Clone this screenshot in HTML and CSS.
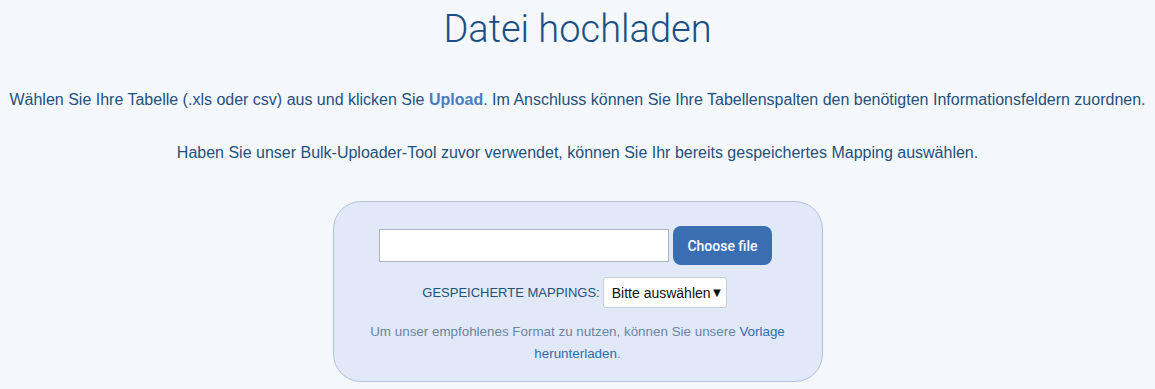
FILE: index.html
```html
<!DOCTYPE html>
<html lang="de">
<head>
  <meta charset="UTF-8" />
  <meta name="viewport" content="width=device-width, initial-scale=1.0" />
  <title>Datei hochladen</title>
  <link rel="stylesheet" href="styles.css">
</head>
<body>
  <div class="upload-page">
    <h1 class="title">Datei hochladen</h1>

    <p class="intro">Wählen Sie Ihre Tabelle (.xls oder csv) aus und klicken Sie <strong>Upload</strong>. Im Anschluss können Sie Ihre Tabellenspalten den benötigten Informationsfeldern zuordnen.</p>
    <p class="intro">Haben Sie unser Bulk-Uploader-Tool zuvor verwendet, können Sie Ihr bereits gespeichertes Mapping auswählen.</p>

    <div class="upload-box">
      <div class="file-row">
        <input type="text" class="file-name" id="file-name" readonly>
        <button class="choose-btn" id="choose">Choose file</button>
      </div>

      <div class="mapping-row">
        <label for="mapping">GESPEICHERTE MAPPINGS:</label>
        <div class="select" id="mapping">
          <span>Bitte auswählen</span><span class="caret">▼</span>
        </div>
      </div>

      <p class="hint">Um unser empfohlenes Format zu nutzen, können Sie unsere <a href="#">Vorlage</a><br><a href="#">herunterladen</a>.</p>
    </div>
  </div>
</body>
</html>
```

FILE: styles.css
```css
:root {
  --bg: #f4f8fc;
  --text: #24507c;
  --title: #1b4f82;
  --accent: #3a6db1;
  --box: #e1e9f8;
  --box-border: #b3c0d6;
}

body {
  margin: 0;
  background: var(--bg);
  color: var(--text);
  font-family: 'Liberation Sans', Arial, sans-serif;
}

.upload-page {
  text-align: center;
  padding-top: 6px;
}

.title {
  margin: 0;
  font-family: Roboto, sans-serif;
  font-weight: 300;
  font-size: 38px;
  line-height: 46px;
  color: var(--title);
}

.intro {
  margin: 38px 0 0;
  font-size: 16px;
  line-height: 20px;
}

.intro + .intro {
  margin-top: 33px;
}

.intro strong {
  color: #4a7dbf;
}

.upload-box {
  width: 488px;
  margin: 38px auto 0;
  padding: 24px 0 16px;
  background: var(--box);
  border: 1px solid var(--box-border);
  border-radius: 28px;
}

.file-row {
  display: flex;
  justify-content: center;
  align-items: center;
  gap: 4px;
  padding-right: 4px;
}

.file-name {
  width: 290px;
  height: 33px;
  box-sizing: border-box;
  border: 1px solid #aab4c4;
  background: #fff;
  margin: 0;
}

.choose-btn {
  width: 99px;
  height: 39px;
  border: none;
  border-radius: 8px;
  background: var(--accent);
  color: #fff;
  font-family: Roboto, sans-serif;
  font-weight: 500;
  font-size: 14px;
  cursor: pointer;
}

.mapping-row {
  display: flex;
  justify-content: center;
  align-items: center;
  gap: 3px;
  margin-top: 12px;
  padding-right: 6px;
  font-size: 13px;
}

.select {
  width: 124px;
  height: 31px;
  box-sizing: border-box;
  display: flex;
  align-items: center;
  padding-left: 8px;
  background: #fff;
  border: 1px solid #c4ccd8;
  border-radius: 3px;
  color: #111;
  font-size: 14px;
}

.caret {
  font-size: 13px;
}

.hint {
  margin: 13px auto 0;
  font-size: 13.4px;
  line-height: 22px;
  color: #6a84a3;
}

.hint a {
  color: #2f6cb0;
  text-decoration: none;
}
```
